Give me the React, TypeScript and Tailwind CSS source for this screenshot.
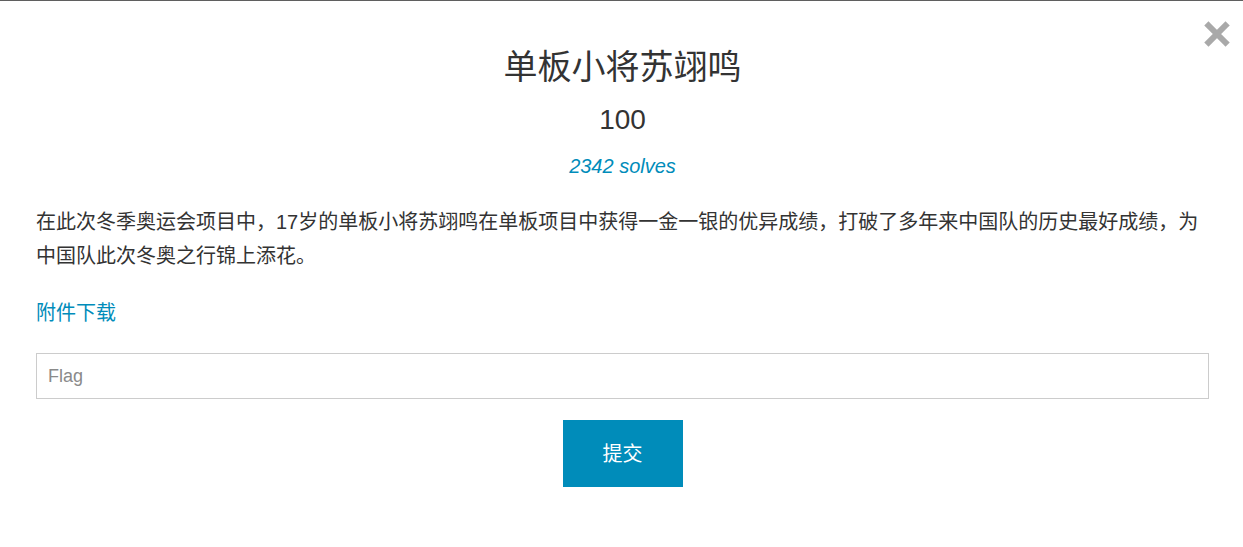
import React from "react";

export default function App() {
  const latin = { fontFamily: '"Liberation Sans", Arial, "Noto Sans CJK SC", sans-serif' };
  return (
    <div
      className="relative w-full h-[547px] bg-white border-t border-[#5f5f5f] pl-[36px] pr-[34px] text-[#333333]"
      style={latin}
    >
      <button className="absolute right-[13px] top-[20px] w-[26px] h-[26px] flex items-center justify-center">
        <svg width="26" height="26" viewBox="0 0 26 26">
          <path d="M4.5 4.5 L21.5 21.5 M21.5 4.5 L4.5 21.5" stroke="#a9a9a9" strokeWidth="6" strokeLinecap="square" />
        </svg>
      </button>

      <div className="flex flex-col items-center pt-[44px]">
        <h2 className="text-[34px] leading-[44px] font-normal">单板小将苏翊鸣</h2>
        <div className="mt-[13px] text-[28px] leading-[36px]">100</div>
        <div className="mt-[14px] text-[20px] leading-[28px] italic text-[#008cba]">2342 solves</div>
      </div>

      <p className="mt-[25px] text-[20px] leading-[34px] text-[#333333]">
        在此次冬季奥运会项目中，17岁的单板小将苏翊鸣在单板项目中获得一金一银的优异成绩，打破了多年来中国队的历史最好成绩，为中国队此次冬奥之行锦上添花。
      </p>

      <div className="mt-[23px] text-[20px] leading-[34px]">
        <a className="text-[#008cba]" href="#">附件下载</a>
      </div>

      <input
        className="mt-[23px] block w-full h-[46px] border border-[#cccccc] px-[11px] text-[18px] placeholder:text-[#8a8a8a] outline-none"
        placeholder="Flag"
        style={latin}
      />

      <div className="mt-[21px] flex justify-center">
        <button className="w-[120px] h-[67px] bg-[#008cba] text-white text-[20px]">提交</button>
      </div>
    </div>
  );
}
